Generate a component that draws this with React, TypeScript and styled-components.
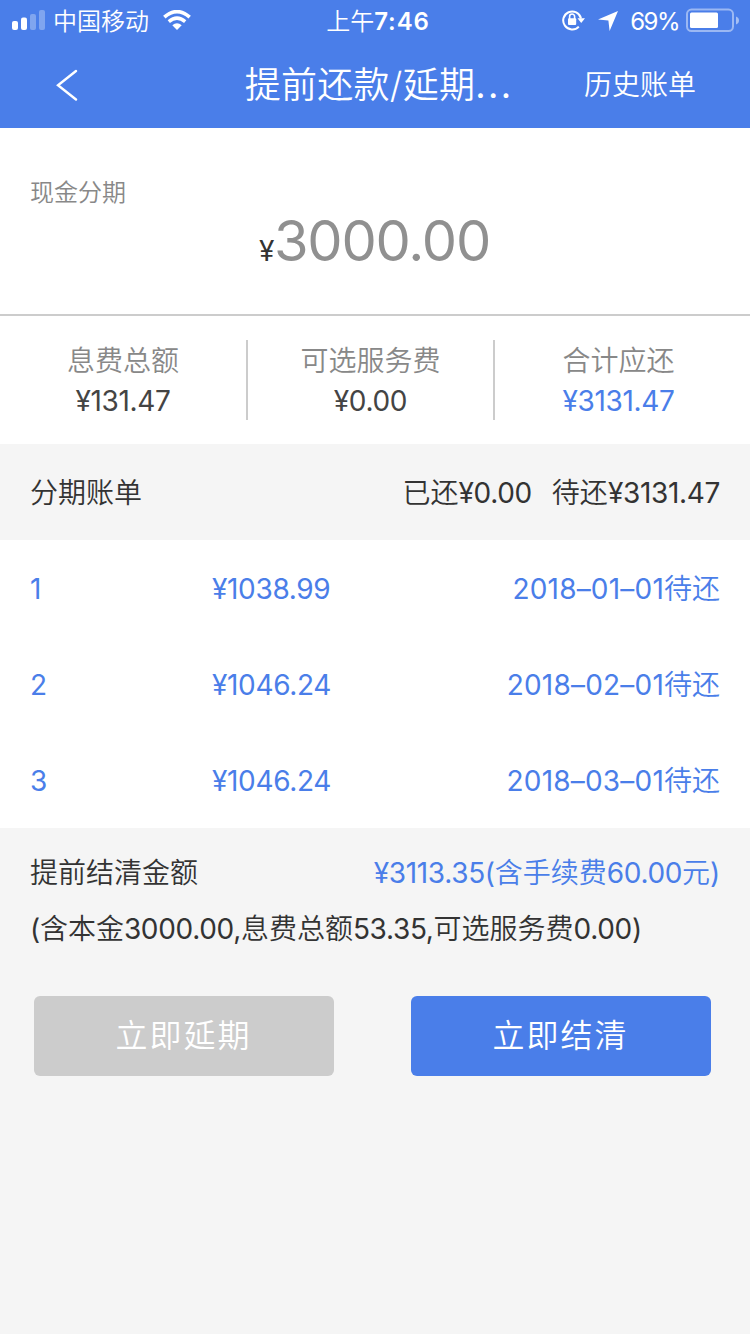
import React from 'react';
import styled, { createGlobalStyle } from 'styled-components';

const BLUE = '#4a7ee9';

const GlobalStyle = createGlobalStyle`
  * { box-sizing: border-box; }
  body {
    margin: 0;
    background: #f5f5f5;
    color: #333;
    font-family: Inter, "Noto Sans CJK SC", sans-serif;
    font-size: 28px;
    font-weight: 350;
  }
`;

const Screen = styled.div`
  width: 750px;
  height: 1334px;
  overflow: hidden;
  background: #f5f5f5;
`;

const Header = styled.header`
  height: 128px;
  background: ${BLUE};
  color: #fff;
`;

const StatusBar = styled.div`
  display: grid;
  grid-template-columns: 1fr auto 1fr;
  align-items: start;
  height: 40px;
  padding: 0 11px 0 12px;
  font-size: 24px;
  line-height: 43px;
`;

const StatusGroup = styled.div<{ $end?: boolean }>`
  display: flex;
  align-items: center;
  justify-content: ${(p) => (p.$end ? 'flex-end' : 'flex-start')};
  height: 40px;
`;

const Carrier = styled.span`
  margin: 0 14px 0 7px;
  padding-top: 2px;
`;

const Clock = styled.time`
  margin-left: 5px;
  b { font-weight: 600; letter-spacing: 0.9px; }
`;

const Percent = styled.span`
  margin: 0 7px 0 12px;
  padding-top: 2px;
  font-weight: 400;
  letter-spacing: -1.5px;
`;

const StatusSpacer = styled.span`
  width: 12px;
`;

const NavBar = styled.nav`
  display: grid;
  grid-template-columns: 190px 1fr 190px;
  grid-template-rows: 88px;
  align-items: center;
  height: 88px;
  line-height: 88px;
`;

const BackButton = styled.div`
  display: flex;
  padding-left: 56px;
`;

const Title = styled.h1`
  margin: 0;
  padding: 2px 0 0 8px;
  font-size: 36px;
  font-weight: 350;
  text-align: center;
  white-space: nowrap;
  letter-spacing: 0.3px;
`;

const Ellipsis = styled.span`
  font-weight: 400;
  letter-spacing: 2.3px;
`;

const HistoryLink = styled.span`
  padding: 2px 0 0 24px;
`;

const Latin = styled.span`
  font-weight: 400;
  letter-spacing: -0.33px;
`;

const Principal = styled.section`
  height: 188px;
  padding: 47px 30px 0;
  background: #fff;
  border-bottom: 2px solid #ccc;
`;

const ProductName = styled.div`
  color: #888;
  font-size: 24px;
  line-height: 36px;
`;

const PrincipalAmount = styled.div`
  padding-right: 1px;
  text-align: center;
  line-height: 60px;
  height: 60px;
`;

const BigNumber = styled.span`
  color: #909090;
  font-size: 56px;
  font-weight: 400;
  letter-spacing: -1.2px;
`;

const Summary = styled.section`
  display: grid;
  grid-template-columns: 248px 247px 247px;
  height: 128px;
  padding: 24px 0;
  background: #fff;
`;

const SummaryItem = styled.div`
  height: 80px;
  padding-top: 1px;
  text-align: center;
  line-height: 40px;
  &:not(:last-child) { border-right: 2px solid #ccc; }
`;

const SummaryLabel = styled.div`
  color: #888;
`;

const SummaryValue = styled.div<{ $blue?: boolean }>`
  color: ${(p) => (p.$blue ? BLUE : '#444')};
`;

const BillsHeading = styled.section`
  display: flex;
  justify-content: space-between;
  height: 96px;
  padding: 0 30px;
  line-height: 98px;
`;

const Totals = styled.div`
  display: flex;
  gap: 20px;
`;

const BillList = styled.section`
  background: #fff;
  color: ${BLUE};
`;

const BillRow = styled.div`
  display: grid;
  grid-template-columns: 182px 1fr auto;
  height: 96px;
  padding: 0 30px;
  line-height: 98px;
`;

const DueDate = styled.span`
  font-weight: 400;
  letter-spacing: 0.2px;
`;

const Settlement = styled.section`
  padding: 16px 30px 0;
`;

const SettlementLine = styled.div`
  display: flex;
  justify-content: space-between;
  height: 56px;
  line-height: 58px;
  white-space: nowrap;
`;

const Fee = styled.span`
  color: ${BLUE};
`;

const Actions = styled.div`
  display: flex;
  justify-content: space-between;
  padding: 40px 39px 0 34px;
`;

const ActionButton = styled.button<{ $disabled?: boolean }>`
  width: 300px;
  height: 80px;
  padding: 0 1px 7px 0;
  border: 0;
  border-radius: 6px;
  background: ${(p) => (p.$disabled ? '#ccc' : BLUE)};
  color: #fff;
  font: inherit;
  font-size: 32px;
  letter-spacing: 2px;
`;

const SignalIcon = () => (
  <svg width="34" height="22" viewBox="0 0 34 22" fill="#fff">
    <rect x="0" y="12" width="6" height="9" rx="2" />
    <rect x="9" y="8.5" width="6" height="12.5" rx="2" />
    <rect x="18" y="5" width="6" height="16" rx="2" opacity=".3" />
    <rect x="27" y="1" width="6" height="20" rx="2" opacity=".3" />
  </svg>
);

const WifiIcon = () => (
  <svg width="28" height="20" viewBox="0 0 28 20" fill="none" stroke="#fff">
    <path d="M1.3 7.2Q14-4 26.7 7.2" strokeWidth="3.6" />
    <path d="M5.8 11.6Q14 4.6 22.2 11.6" strokeWidth="3.5" />
    <path d="M14 20L9.3 15.3Q14 11.4 18.7 15.3Z" fill="#fff" stroke="none" />
  </svg>
);

const RotationLockIcon = () => (
  <svg width="24" height="22" viewBox="0 0 24 22" fill="none">
    <path d="M16.8 17.6A9 9 0 1 1 19 9.5" stroke="#fff" strokeWidth="2" />
    <path d="M15.5 9.3H23L19.2 14Z" fill="#fff" />
    <rect x="6" y="9.3" width="8.2" height="6.6" rx="1" fill="#fff" />
    <path d="M7.6 10V7.5a2.5 2.5 0 0 1 5 0V10" stroke="#fff" strokeWidth="1.6" />
  </svg>
);

const LocationIcon = () => (
  <svg width="20" height="21" viewBox="0 0 20 21" fill="#fff">
    <path d="M20 1L11.6 21L10.4 10.6L0 9.4Z" />
  </svg>
);

const BatteryIcon = () => (
  <svg width="53" height="24" viewBox="0 -0.6 53 24" fill="none">
    <rect x="1" y="1" width="46" height="21.4" rx="4.5" stroke="#fff" strokeOpacity=".45" strokeWidth="2" />
    <rect x="4" y="4" width="28" height="15.4" rx="1.5" fill="#fff" />
    <path d="M50 8q3 1.2 3 4t-3 4Z" fill="#fff" fillOpacity=".5" />
  </svg>
);

const BackIcon = () => (
  <svg width="22" height="34" viewBox="0 0 22 34" fill="none">
    <path d="M20 4L2 18.3L20 32.5" stroke="#fff" strokeWidth="2.4" strokeLinecap="round" />
  </svg>
);

/* Sets digits and Latin punctuation in a slightly heavier weight than the Chinese text around them. */
const Mixed = ({ text }: { text: string }) => (
  <span>
    {text.split(/([\x21-\x7e¥]+)/).map((run, i) =>
      i % 2 ? <Latin key={i}>{run}</Latin> : run,
    )}
  </span>
);

const summary = [
  { label: '息费总额', value: '¥131.47' },
  { label: '可选服务费', value: '¥0.00' },
  { label: '合计应还', value: '¥3131.47', blue: true },
];

const bills = [
  { amount: '¥1038.99', date: '2018–01–01' },
  { amount: '¥1046.24', date: '2018–02–01' },
  { amount: '¥1046.24', date: '2018–03–01' },
];

export default function App() {
  return (
    <Screen>
      <GlobalStyle />
      <Header>
        <StatusBar>
          <StatusGroup>
            <SignalIcon />
            <Carrier>中国移动</Carrier>
            <WifiIcon />
          </StatusGroup>
          <Clock>上午<b>7:46</b></Clock>
          <StatusGroup $end>
            <RotationLockIcon />
            <StatusSpacer />
            <LocationIcon />
            <Percent>69%</Percent>
            <BatteryIcon />
          </StatusGroup>
        </StatusBar>
        <NavBar>
          <BackButton><BackIcon /></BackButton>
          <Title>提前还款/延期<Ellipsis>...</Ellipsis></Title>
          <HistoryLink>历史账单</HistoryLink>
        </NavBar>
      </Header>
      <Principal>
        <ProductName>现金分期</ProductName>
        <PrincipalAmount><Mixed text="¥" /><BigNumber>3000.00</BigNumber></PrincipalAmount>
      </Principal>
      <Summary>
        {summary.map((item) => (
          <SummaryItem key={item.label}>
            <SummaryLabel>{item.label}</SummaryLabel>
            <SummaryValue $blue={item.blue}><Mixed text={item.value} /></SummaryValue>
          </SummaryItem>
        ))}
      </Summary>
      <BillsHeading>
        <span>分期账单</span>
        <Totals><Mixed text="已还¥0.00" /><Mixed text="待还¥3131.47" /></Totals>
      </BillsHeading>
      <BillList>
        {bills.map((bill, i) => (
          <BillRow key={bill.date}>
            <Mixed text={String(i + 1)} />
            <Mixed text={bill.amount} />
            <span><DueDate>{bill.date}</DueDate>待还</span>
          </BillRow>
        ))}
      </BillList>
      <Settlement>
        <SettlementLine>
          <span>提前结清金额</span>
          <Fee><Mixed text="¥3113.35(含手续费60.00元)" /></Fee>
        </SettlementLine>
        <SettlementLine><Mixed text="(含本金3000.00,息费总额53.35,可选服务费0.00)" /></SettlementLine>
      </Settlement>
      <Actions>
        <ActionButton $disabled>立即延期</ActionButton>
        <ActionButton>立即结清</ActionButton>
      </Actions>
    </Screen>
  );
}
